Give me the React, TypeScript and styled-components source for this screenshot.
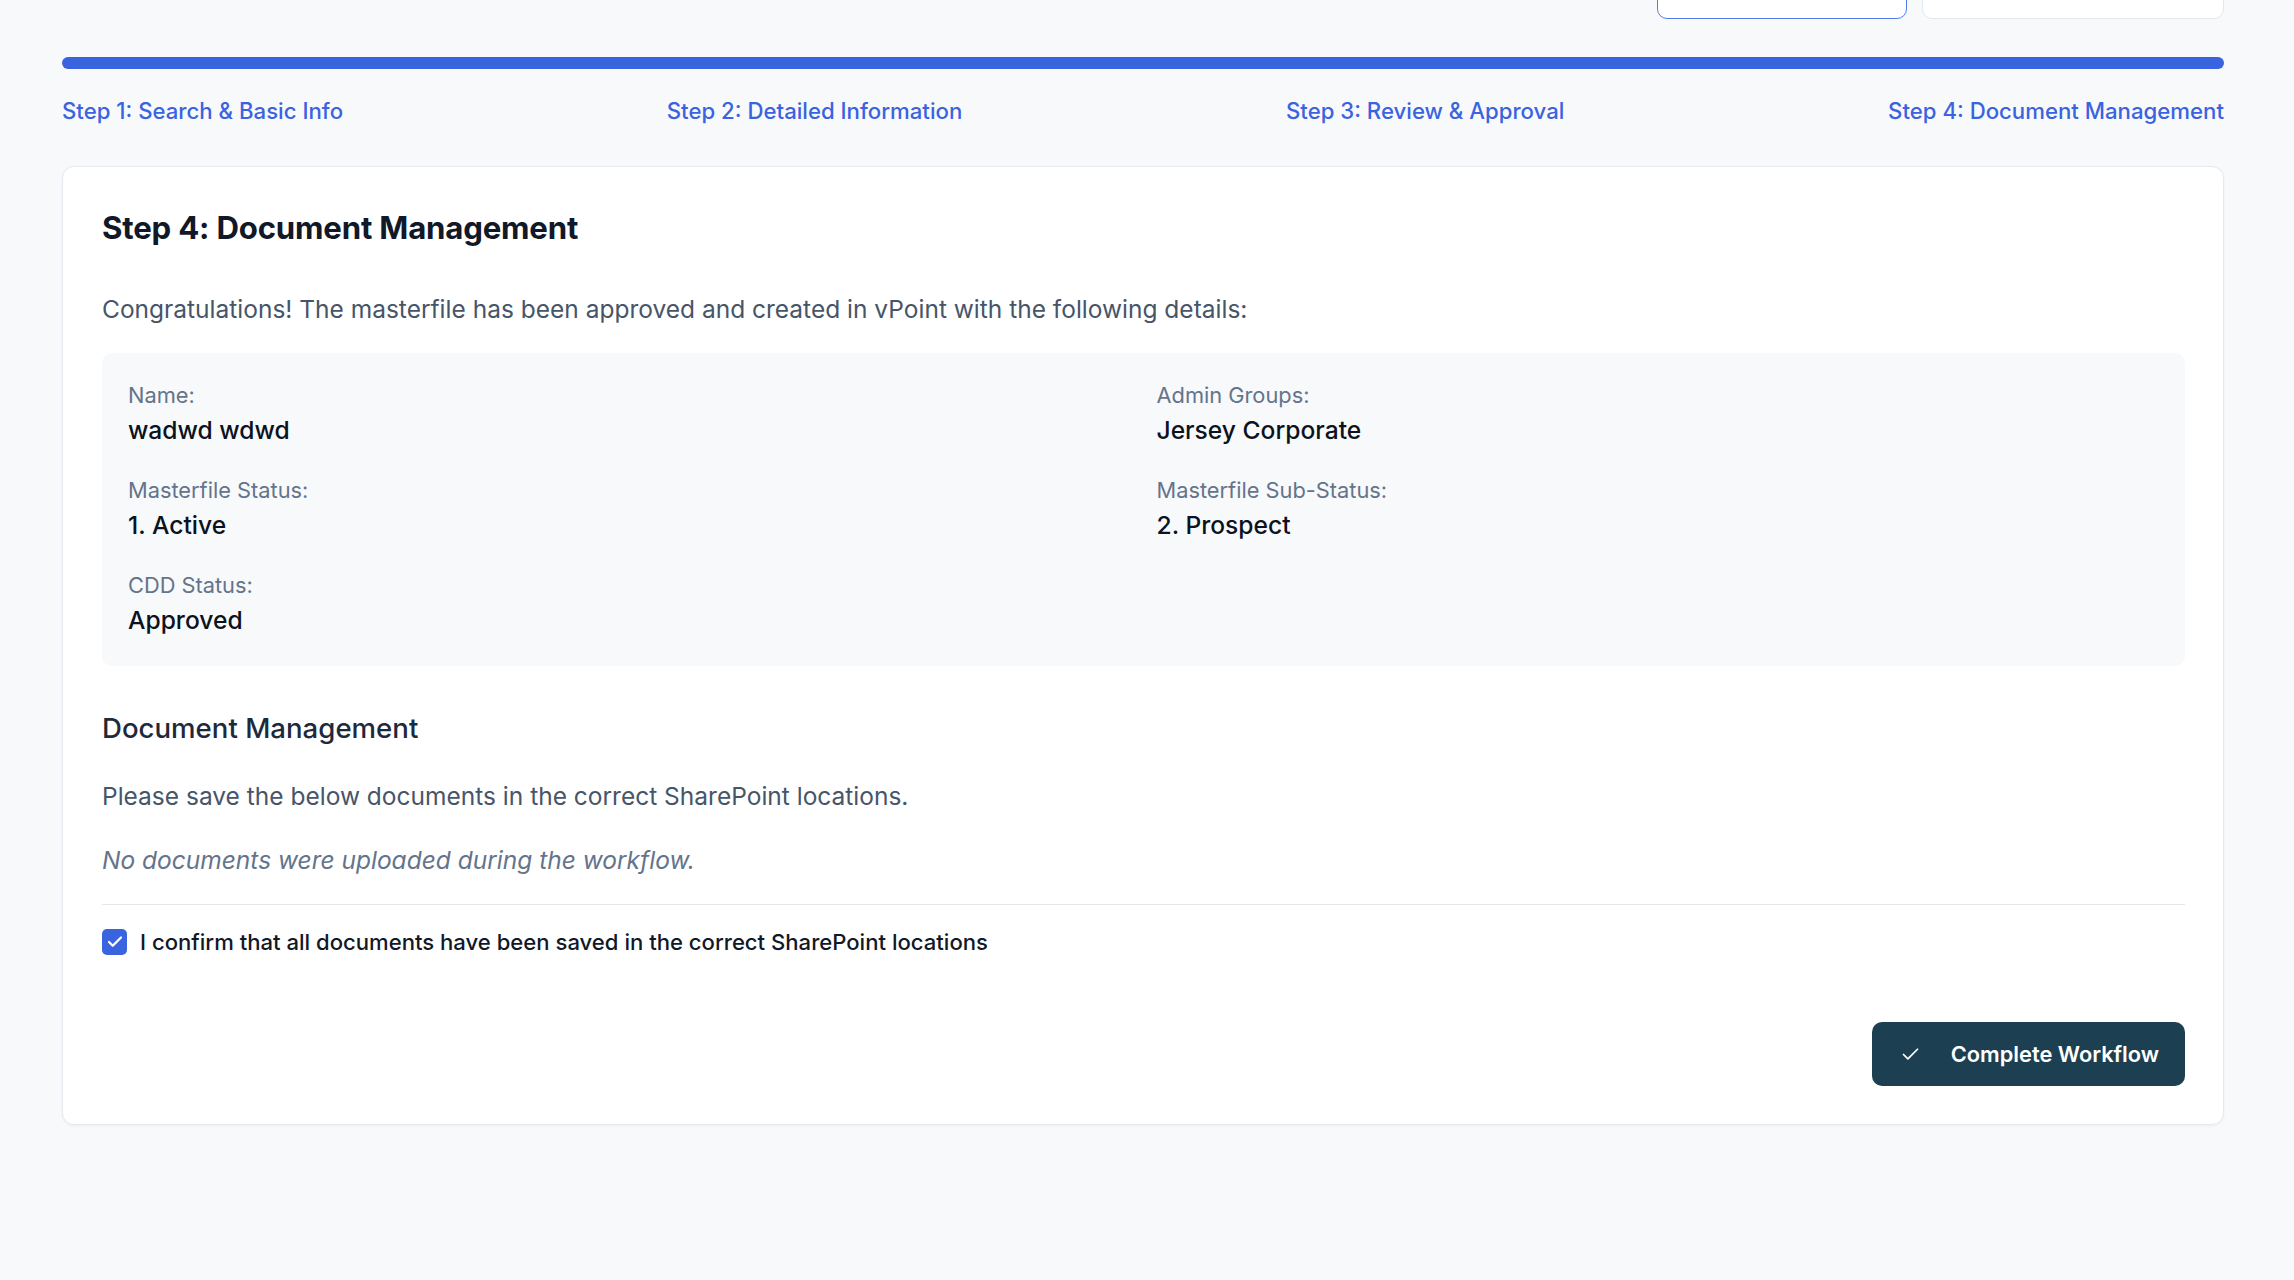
import React from "react";
import styled, { createGlobalStyle } from "styled-components";
import { Check } from "lucide-react";

const GlobalStyle = createGlobalStyle`
  * { box-sizing: border-box; }
  html, body { margin: 0; padding: 0; background: #f8f9fb; }
  body { font-family: Inter, "Noto Sans", "Liberation Sans", sans-serif; color: #0f172a; }
`;

const Page = styled.div`
  min-height: 1280px;
  padding: 0 70px 0 62px;
  display: flex;
  flex-direction: column;
`;

const Toolbar = styled.div`
  display: flex;
  justify-content: flex-end;
  gap: 15px;
  margin-top: -37px;
`;

const TopButton = styled.button<{ $active?: boolean; $w: number }>`
  width: ${(p) => p.$w}px;
  height: 56px;
  background: #ffffff;
  border: 1px solid ${(p) => (p.$active ? "#4f7fe6" : "#e3e7ee")};
  border-radius: 10px;
`;

const ProgressTrack = styled.div`
  margin-top: 38px;
  height: 12px;
  border-radius: 6px;
  background: #3a63e0;
`;

const Steps = styled.div`
  display: flex;
  justify-content: space-between;
  margin-top: 27px;
`;

const StepLabel = styled.span`
  font-size: 22.2px;
  line-height: 30px;
  font-weight: 500;
  color: #3a63e0;
`;

const Card = styled.section`
  margin-top: 40px;
  background: #ffffff;
  border: 1px solid #e6e9ef;
  border-radius: 12px;
  box-shadow: 0 1px 3px rgba(15, 23, 42, 0.05);
  padding: 43px 38px 38px 39px;
  display: flex;
  flex-direction: column;
`;

const Title = styled.h2`
  margin: 0;
  font-size: 31.2px;
  line-height: 36px;
  font-weight: 700;
  color: #111827;
  letter-spacing: -0.2px;
`;

const Paragraph = styled.p<{ $mt: number; $italic?: boolean }>`
  margin: ${(p) => p.$mt}px 0 0;
  font-size: 24.5px;
  line-height: 32px;
  font-style: ${(p) => (p.$italic ? "italic" : "normal")};
  color: ${(p) => (p.$italic ? "#64748b" : "#475569")};
`;

const InfoBox = styled.div`
  margin-top: 28px;
  background: #f8f9fb;
  border-radius: 10px;
  padding: 28px 26px 30px 26px;
  display: grid;
  grid-template-columns: 1fr 1fr;
  column-gap: 26px;
  row-gap: 30px;
`;

const Field = styled.div`
  display: flex;
  flex-direction: column;
  gap: 5px;
`;

const FieldLabel = styled.span`
  font-size: 21.8px;
  line-height: 28px;
  color: #64748b;
`;

const FieldValue = styled.span`
  font-size: 24.6px;
  line-height: 32px;
  font-weight: 500;
  color: #0b1220;
`;

const SectionTitle = styled.h3`
  margin: 44px 0 0;
  font-size: 27.6px;
  line-height: 36px;
  font-weight: 500;
  color: #1e293b;
`;

const Divider = styled.hr`
  margin: 28px 0 0;
  border: none;
  border-top: 1px solid #e5e7eb;
`;

const ConfirmRow = styled.label`
  margin-top: 23px;
  display: flex;
  align-items: center;
  gap: 13px;
  font-size: 22.1px;
  line-height: 28px;
  font-weight: 500;
  color: #111827;
`;

const CheckBox = styled.span`
  width: 25px;
  height: 26px;
  border-radius: 5px;
  background: #3a63e0;
  display: inline-flex;
  align-items: center;
  justify-content: center;
  color: #ffffff;
  flex-shrink: 0;
`;

const Actions = styled.div`
  margin-top: 66px;
  display: flex;
  justify-content: flex-end;
`;

const PrimaryButton = styled.button`
  height: 64px;
  padding: 0 26px 0 28px;
  border: none;
  border-radius: 10px;
  background: #1c3f52;
  color: #ffffff;
  display: inline-flex;
  align-items: center;
  gap: 30px;
  font-family: inherit;
  font-size: 21.8px;
  font-weight: 600;
`;

const fields = [
  { label: "Name:", value: "wadwd wdwd" },
  { label: "Admin Groups:", value: "Jersey Corporate" },
  { label: "Masterfile Status:", value: "1. Active" },
  { label: "Masterfile Sub-Status:", value: "2. Prospect" },
  { label: "CDD Status:", value: "Approved" },
];

const steps = [
  "Step 1: Search & Basic Info",
  "Step 2: Detailed Information",
  "Step 3: Review & Approval",
  "Step 4: Document Management",
];

export default function App() {
  return (
    <>
      <GlobalStyle />
      <Page>
        <Toolbar>
          <TopButton $active $w={250} />
          <TopButton $w={302} />
        </Toolbar>
        <ProgressTrack />
        <Steps>
          {steps.map((s) => (
            <StepLabel key={s}>{s}</StepLabel>
          ))}
        </Steps>
        <Card>
          <Title>Step 4: Document Management</Title>
          <Paragraph $mt={47}>
            Congratulations! The masterfile has been approved and created in vPoint with the following details:
          </Paragraph>
          <InfoBox>
            {fields.map((f) => (
              <Field key={f.label}>
                <FieldLabel>{f.label}</FieldLabel>
                <FieldValue>{f.value}</FieldValue>
              </Field>
            ))}
          </InfoBox>
          <SectionTitle>Document Management</SectionTitle>
          <Paragraph $mt={34}>Please save the below documents in the correct SharePoint locations.</Paragraph>
          <Paragraph $mt={32} $italic>
            No documents were uploaded during the workflow.
          </Paragraph>
          <Divider />
          <ConfirmRow>
            <CheckBox>
              <Check size={18} strokeWidth={3} />
            </CheckBox>
            I confirm that all documents have been saved in the correct SharePoint locations
          </ConfirmRow>
          <Actions>
            <PrimaryButton>
              <Check size={21} strokeWidth={2} />
              Complete Workflow
            </PrimaryButton>
          </Actions>
        </Card>
      </Page>
    </>
  );
}
